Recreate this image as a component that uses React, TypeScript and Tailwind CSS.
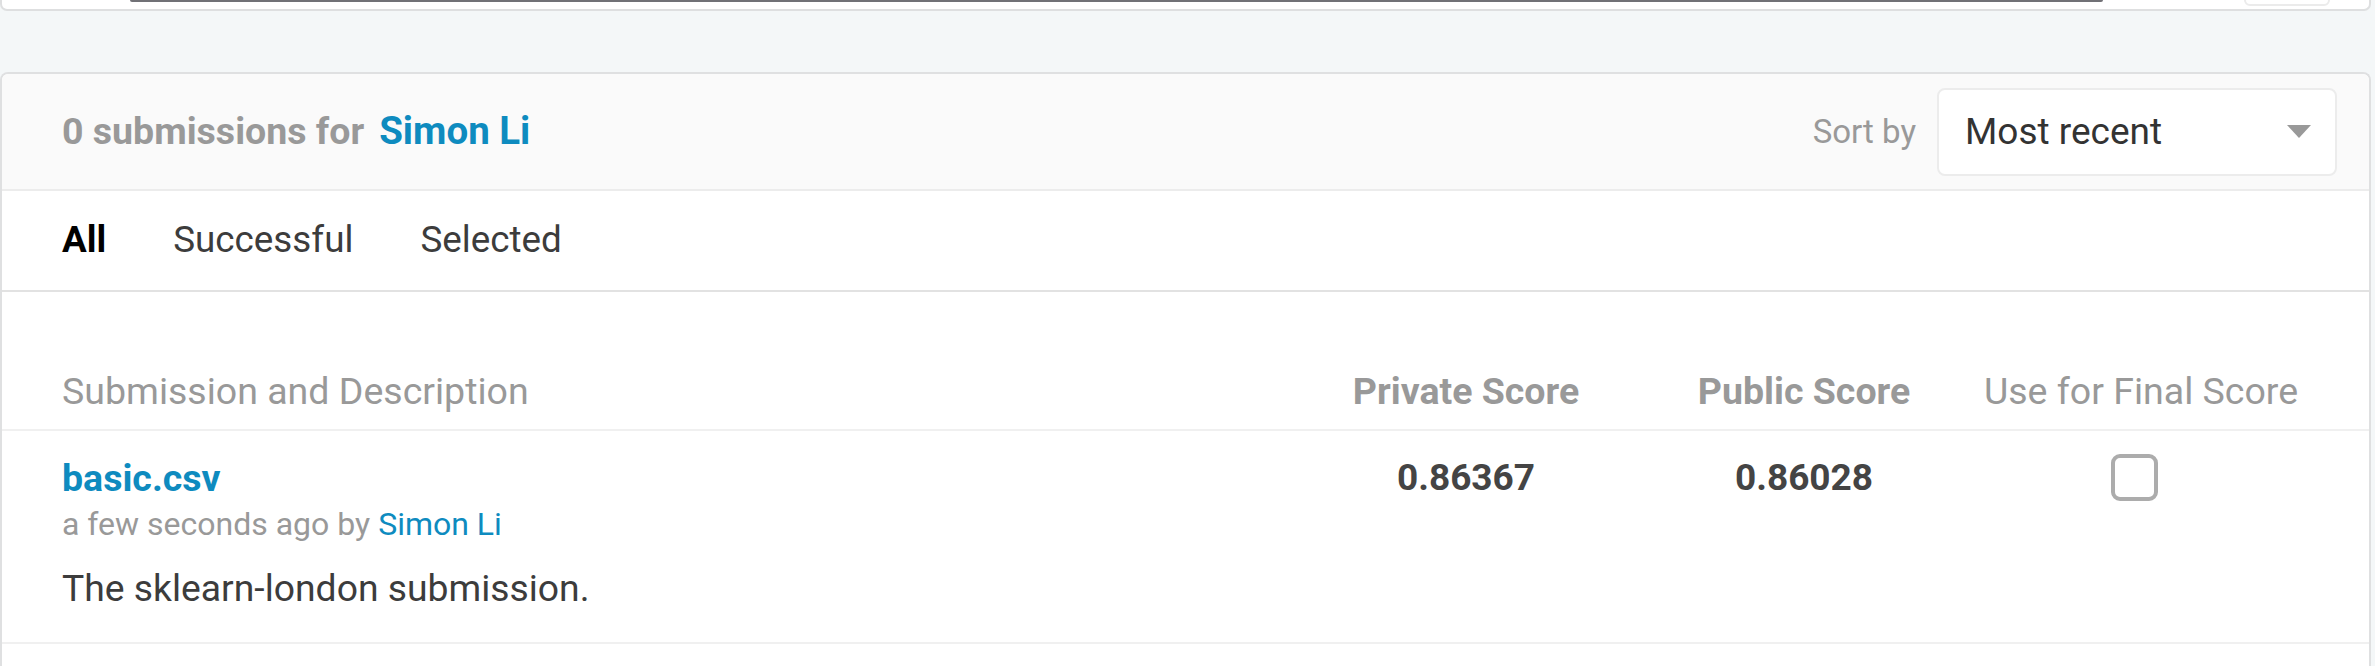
import React from "react";

export default function App() {
  return (
    <div
      className="w-[2375px] h-[666px] bg-[#f4f7f8] overflow-hidden"
      style={{ fontFamily: "Roboto, 'Liberation Sans', sans-serif" }}
    >
      {/* bottom of the previous panel */}
      <div className="relative w-[2371px] h-[11px] bg-white border-x-2 border-b-2 border-[#dedfe0] rounded-b-[7px]">
        <div className="absolute left-[128px] top-0 w-[1973px] h-[2px] bg-[#717176] rounded-b-[3px]" />
        <div className="absolute left-[2242px] top-[-12px] w-[86px] h-[18px] border-2 border-[#ebebeb] rounded-b-[6px]" />
      </div>

      {/* main card */}
      <div className="mt-[61px] w-[2371px] h-[620px] bg-white border-x-2 border-t-2 border-[#dfe0e1] rounded-t-[8px] overflow-hidden">
        {/* header */}
        <div className="h-[117px] bg-[#fafafa] border-b-2 border-[#ececec] flex items-center justify-between pl-[60px] pr-[32px]">
          <div className="flex items-center gap-[15px] text-[37.5px] font-bold leading-[1.2]">
            <span className="text-[#999999]">0 submissions for</span>
            <span className="text-[#0e8bbf] text-[38.5px]">Simon Li</span>
          </div>
          <div className="flex items-center gap-[21px]">
            <span className="text-[33px] text-[#999999]">Sort by</span>
            <div className="w-[400px] h-[88px] bg-white border-2 border-[#ececec] rounded-[8px] flex items-center justify-between pl-[26px] pr-[24px]">
              <span className="text-[37px] text-[#333333]">Most recent</span>
              <svg width="24" height="13" viewBox="0 0 24 13">
                <polygon points="0,0 24,0 12,13" fill="#999999" />
              </svg>
            </div>
          </div>
        </div>

        {/* tabs */}
        <div className="h-[101px] border-b-2 border-[#e2e2e2] flex items-center gap-[67px] pl-[60px] text-[36.8px] leading-[1.2]">
          <span className="font-bold text-black">All</span>
          <span className="text-[#3c3c3c]">Successful</span>
          <span className="text-[#3c3c3c]">Selected</span>
        </div>

        {/* table header */}
        <div className="h-[139px] border-b-2 border-[#f0f0f0] flex items-end pb-[15px] px-[60px] text-[37.5px] leading-[1.2] text-[#999999]">
          <div className="flex-1">Submission and Description</div>
          <div className="w-[338px] text-center font-bold">Private Score</div>
          <div className="w-[338px] text-center font-bold">Public Score</div>
          <div className="w-[336px] text-center">Use for Final Score</div>
        </div>

        {/* row */}
        <div className="h-[213px] border-b-2 border-[#f0f0f0] flex items-start pt-[25px] px-[60px]">
          <div className="flex-1 flex flex-col">
            <span className="text-[37.5px] leading-[1.2] font-bold text-[#0e8bbf]">basic.csv</span>
            <span className="mt-[4px] text-[32px] leading-[1.2] text-[#999999]">
              a few seconds ago by <span className="text-[#0e8bbf]">Simon Li</span>
            </span>
            <span className="mt-[23px] text-[37.3px] leading-[1.2] text-[#3c3c3c]">
              The sklearn-london submission.
            </span>
          </div>
          <div className="w-[338px] text-center text-[37px] leading-[1.2] font-bold text-[#444444]">0.86367</div>
          <div className="w-[338px] text-center text-[37px] leading-[1.2] font-bold text-[#444444]">0.86028</div>
          <div className="w-[336px] flex justify-center pr-[14px]">
            <div className="-mt-[2px] w-[47px] h-[47px] border-[4px] border-[#acacac] rounded-[9px] bg-white" />
          </div>
        </div>
      </div>
    </div>
  );
}
